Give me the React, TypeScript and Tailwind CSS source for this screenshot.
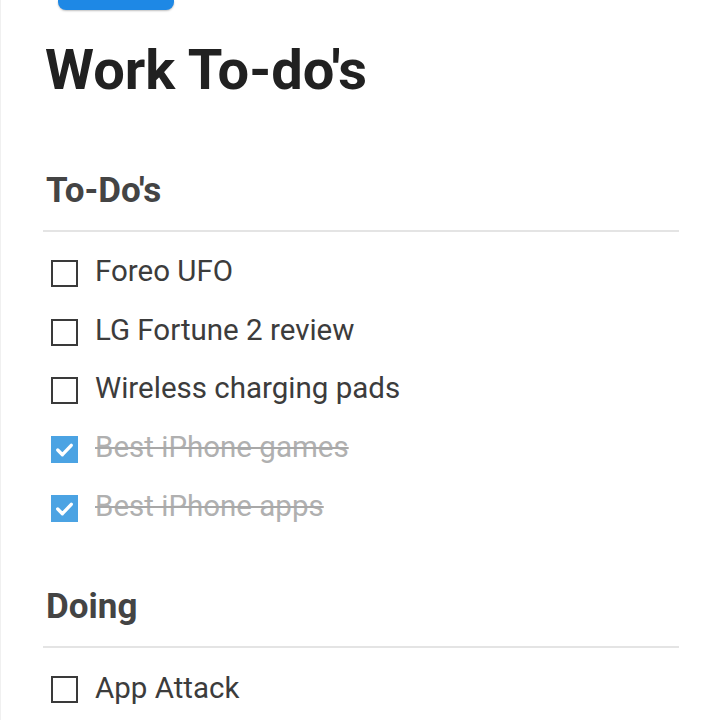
import React from "react";

type Item = { label: string; done?: boolean };

const todos: Item[] = [
  { label: "Foreo UFO" },
  { label: "LG Fortune 2 review" },
  { label: "Wireless charging pads" },
  { label: "Best iPhone games", done: true },
  { label: "Best iPhone apps", done: true },
];

const doing: Item[] = [{ label: "App Attack" }];

function Row({ item }: { item: Item }) {
  return (
    <div className="flex h-[58.7px] items-center pl-[8px]">
      {item.done ? (
        <span className="flex h-[27px] w-[27px] items-center justify-center bg-[#4ba3e3]">
          <svg width="25" height="25" viewBox="0 0 24 24" fill="none">
            <path d="M5.5 12.5l4.5 4.5 8.5-9" stroke="#fff" strokeWidth="3.2" strokeLinecap="round" strokeLinejoin="round" />
          </svg>
        </span>
      ) : (
        <span className="h-[27px] w-[27px] border-[2.5px] border-[#3a3a3a]" />
      )}
      <span
        className={
          item.done
            ? "mb-[3px] ml-[17px] text-[29.5px] leading-none text-[#b0b0b0] line-through decoration-[#a8a8a8] decoration-2"
            : "mb-[3px] ml-[17px] text-[29.5px] leading-none text-[#3c3c3c]"
        }
      >
        {item.label}
      </span>
    </div>
  );
}

function Section({ title, items, top }: { title: string; items: Item[]; top: string }) {
  return (
    <section className={top}>
      <h2 className="pl-[3px] text-[35px] font-bold leading-none text-[#444]">{title}</h2>
      <div className="mt-[22px] h-[2px] bg-[#e4e4e4]" />
      <div className="mt-[12px]">
        {items.map((it) => (
          <Row key={it.label} item={it} />
        ))}
      </div>
    </section>
  );
}

export default function App() {
  return (
    <div className="h-[720px] w-[720px] overflow-hidden border-l border-[#f0f0f0] bg-white font-['Roboto',sans-serif]">
      {/* top button stub */}
      <div className="ml-[57px] h-[10px] w-[116px] rounded-b-[8px] bg-[#1e88e5] shadow-[0_1px_2px_rgba(0,0,0,0.25)]" />

      <div className="pl-[42px] pr-[41px]">
        <h1 className="mt-[32px] pl-[2px] text-[56px] font-bold leading-none text-[#212121]">Work To-do's</h1>

        <Section title="To-Do's" items={todos} top="mt-[75px]" />
        <Section title="Doing" items={doing} top="mt-[52px]" />
      </div>
    </div>
  );
}
